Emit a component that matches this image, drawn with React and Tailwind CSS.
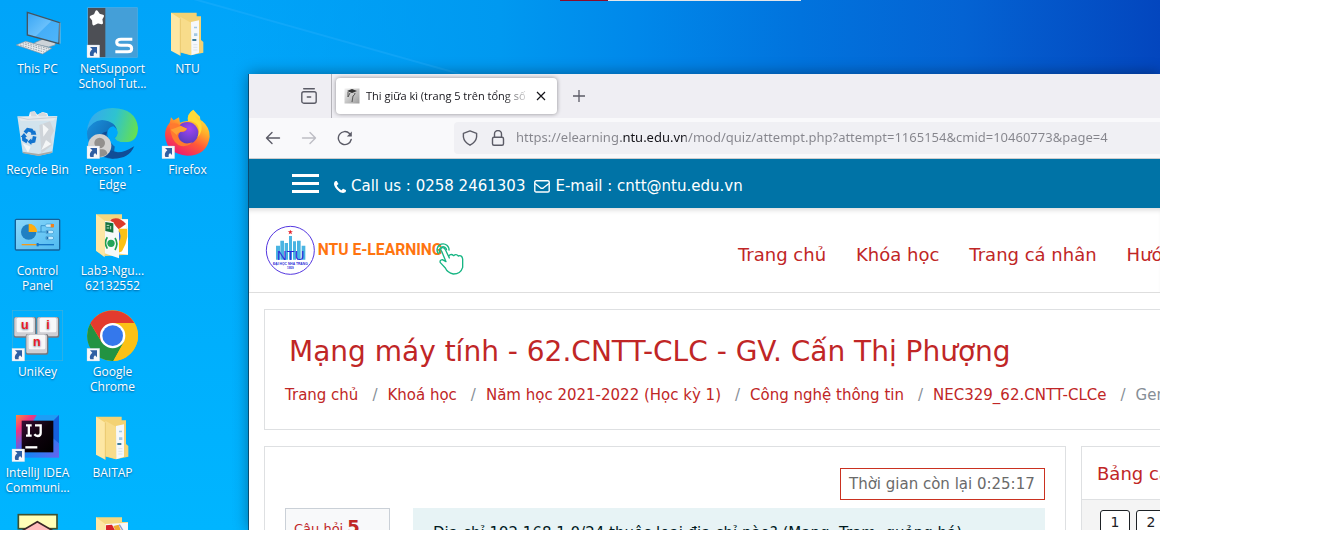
function Shortcut({ x, y }) {
  return (
    <g transform={`translate(${x} ${y})`}>
      <rect width="38" height="38" fill="#f7f8fa" stroke="#b9cfe0" strokeWidth="1" />
      <path d="M9 6H30V27L24 21Q18 25 20 33H10Q5 22 16 13Z" fill="#2f5fa3" />
    </g>
  );
}

function Glyph({ box, children }) {
  return (
    <svg viewBox={box} className="h-14 w-[57px] shrink-0 overflow-hidden" aria-hidden="true">
      {children}
    </svg>
  );
}

function ComputerIcon() {
  return (
    <Glyph box="27 12 171 168">
      <defs>
        <linearGradient id="screen" x1="0" y1="0" x2="1" y2="1">
          <stop offset="0" stopColor="#37a5f5" />
          <stop offset=".5" stopColor="#69c0fb" />
          <stop offset=".52" stopColor="#45aef7" />
          <stop offset="1" stopColor="#4fb6fb" />
        </linearGradient>
      </defs>
      <path d="M104 128L132 116L166 126L165 135L146 141L104 132Z" fill="#cdd3d8" stroke="#8a949d" strokeWidth="2" />
      <path d="M82 37L179 68L177 131L82 105Z" fill="url(#screen)" stroke="#46545f" strokeWidth="4" />
      <path d="M180 68V131" stroke="#c7ced4" strokeWidth="2" />
      <path d="M49 135L77 124L155 145L128 162Z" fill="#e9ecee" stroke="#89939b" strokeWidth="2" />
      <path d="M60 135L132 156M68 131L140 151M75 128L147 147" stroke="#9aa3ab" strokeWidth="3" strokeDasharray="5 3" />
    </Glyph>
  );
}

function RecycleBinIcon() {
  return (
    <Glyph box="27 315 171 168">
      <path d="M57 352L86 350L90 336L104 334L112 344L128 336L142 340L146 352L170 350L160 362H62Z" fill="#f3f4f6" />
      <path d="M90 336L104 334L112 350L96 356ZM112 344L128 336L142 344L130 360Z" fill="#d5d9dd" />
      <path d="M52 349L172 348L157 458L116 467L68 458Z" fill="#e4e8ec" fillOpacity=".92" />
      <path d="M55 352L84 358L170 352" fill="none" stroke="#b9c3cb" strokeWidth="2" />
      <path d="M118 375L150 364L162 392L152 412L156 436L124 460Z" fill="#cfd4d9" />
      <path d="M128 372L146 388L130 410ZM138 420L154 432L124 450ZM68 430L92 440L84 458Z" fill="#f4f6f7" />
      <path d="M68 455L116 462L157 454L155 459L116 468L69 460Z" fill="#a9a9a5" />
      <g fill="none" stroke="#1274cf" strokeWidth="11">
        <path d="M75 398L83 389L94 391L99 399" />
        <path d="M104 409L101 423L92 425" />
        <path d="M82 425L72 419L71 407" />
      </g>
      <path d="M92 404H109L105 391ZM94 415V435L83 425ZM62 411L72 399L81 411Z" fill="#1274cf" />
    </Glyph>
  );
}

function ControlPanelIcon() {
  return (
    <Glyph box="27 18 171 168">
      <defs>
        <linearGradient id="panel" x1="0" y1="0" x2="1" y2="1">
          <stop offset="0" stopColor="#8bd8fb" />
          <stop offset="1" stopColor="#4fb9f0" />
        </linearGradient>
      </defs>
      <rect x="46" y="58" width="133" height="92" rx="3" fill="url(#panel)" stroke="#146199" strokeWidth="4" />
      <circle cx="86" cy="96" r="23" fill="#2180c2" />
      <path d="M86 71A25 25 0 0 1 111 96H86Z" fill="#ffad0f" />
      <path d="M112 96H123V77H136M123 96H136" fill="none" stroke="#1c79b8" strokeWidth="2" />
      <g fill="#bfeaff" stroke="#3c9cd2" strokeWidth="2">
        <rect x="136" y="72" width="25" height="10" rx="5" />
        <rect x="136" y="91" width="25" height="10" rx="5" />
        <rect x="136" y="109" width="25" height="10" rx="5" />
      </g>
      <rect x="152" y="72" width="10" height="10" fill="#f0821c" />
      <path d="M139 92h6v8h-6zM139 110h6v8h-6z" fill="#176eb0" />
      <path d="M65 134H110" stroke="#f39b19" strokeWidth="4" />
      <path d="M110 134H162" stroke="#1474c4" strokeWidth="4" />
      <rect x="110" y="129" width="6" height="10" fill="#1474c4" />
    </Glyph>
  );
}

function Key({ x, y, letter }) {
  return (
    <g transform={`translate(${x} ${y})`}>
      <rect width="68" height="62" rx="6" fill="#77777d" />
      <rect x="2" y="1" width="62" height="57" rx="5" fill="#cfcfd4" />
      <rect x="9" y="2" width="50" height="44" rx="5" fill="#f8f8f9" />
      <text x="34" y="36" textAnchor="middle" fontFamily="Liberation Sans" fontWeight="700" fontSize="38" fill="#ee1c24">
        {letter}
      </text>
    </g>
  );
}

function UniKeyIcon() {
  return (
    <Glyph box="27 321 171 168">
      <rect x="37" y="331" width="151" height="151" fill="none" stroke="#3fb0dc" strokeWidth="2" />
      <Key x={41} y={351} letter="u" />
      <Key x={110} y={351} letter="i" />
      <Key x={77} y={402} letter="n" />
      <Shortcut x={36} y={445} />
    </Glyph>
  );
}

function IntelliJIcon() {
  return (
    <Glyph box="27 54 171 168">
      <defs>
        <linearGradient id="ijFrame" x1="0" y1="0" x2="1" y2="1">
          <stop offset="0" stopColor="#ff8a3c" />
          <stop offset=".2" stopColor="#f0357f" />
          <stop offset=".42" stopColor="#5a63e8" />
          <stop offset=".6" stopColor="#1683f4" />
          <stop offset="1" stopColor="#6a62ee" />
        </linearGradient>
        <linearGradient id="ijInner" x1="0" y1="0" x2="1" y2="1">
          <stop offset="0" stopColor="#3a0c38" />
          <stop offset=".5" stopColor="#0d020c" />
          <stop offset="1" stopColor="#000" />
        </linearGradient>
      </defs>
      <rect x="48" y="75" width="129" height="128" fill="url(#ijFrame)" />
      <path d="M110 75H177L159 93H100Z" fill="#1d9df5" />
      <path d="M177 75V160L159 145V93Z" fill="#1660dc" />
      <rect x="65" y="92" width="95" height="95" fill="url(#ijInner)" />
      <path d="M78 106H95M86.500 106V136M78 137H95M105 106H122V129Q122 138 113 138Q107 138 103 133" fill="none" stroke="#fff" strokeWidth="7" />
      <path d="M76 172H112" stroke="#fff" strokeWidth="7" />
      <Shortcut x={36} y={177} />
    </Glyph>
  );
}

function HouseIcon() {
  return (
    <Glyph box="27 357 171 168">
      <rect x="55" y="374" width="116" height="42" fill="#ffffb8" stroke="#3d5230" strokeWidth="5" />
      <path d="M60 426L112 395L165 426V500H60Z" fill="#ffbcbc" stroke="#3b2626" strokeWidth="5" />
    </Glyph>
  );
}

function NetSupportIcon() {
  return (
    <Glyph box="252 12 171 168">
      <rect x="263" y="23" width="149" height="149" fill="#449fd8" stroke="#58aee0" strokeWidth="2" />
      <rect x="264" y="24" width="52" height="147" fill="#4d4f55" />
      <path
        d="M290 35L297 45L308 48L303 57L305 69L293 66L281 72L280 60L273 51L285 46Z"
        fill="#fff"
        stroke="#fff"
        strokeWidth="8"
        strokeLinejoin="round"
      />
      <path
        d="M397 118H363Q350 118 350 127Q350 136 363 136H383Q395 136 395 146Q395 155 383 155H346"
        fill="none"
        stroke="#fff"
        strokeWidth="9"
      />
      <Shortcut x={261} y={135} />
    </Glyph>
  );
}

function EdgeIcon() {
  return (
    <Glyph box="252 315 171 168">
      <defs>
        <linearGradient id="edgeTop" x1="0" y1=".4" x2="1" y2=".6">
          <stop offset="0" stopColor="#36a9ee" />
          <stop offset=".5" stopColor="#2ec3d0" />
          <stop offset="1" stopColor="#66e04f" />
        </linearGradient>
        <linearGradient id="edgeMid" x1="0" y1="0" x2="1" y2="1">
          <stop offset="0" stopColor="#1b95e0" />
          <stop offset="1" stopColor="#0c559f" />
        </linearGradient>
      </defs>
      <path d="M261 400A77 77 0 0 1 280 350Q320 340 352 372L340 476A77 77 0 0 1 261 400Z" fill="url(#edgeMid)" />
      <path d="M323 394Q305 425 329 448Q355 470 403 438Q388 476 340 476Q294 472 292 430Q295 398 323 394Z" fill="#104d96" />
      <path d="M261 393Q267 327 338 324Q408 326 414 383Q414 426 374 427Q344 426 344 413Q352 410 352 398Q350 364 306 360Q274 363 261 393Z" fill="url(#edgeTop)" />
      <path d="M322 400Q323 382 340 379Q354 388 353 400Q351 410 344 413Q350 428 378 427Q403 427 404 437Q356 459 334 430Q322 415 322 400Z" fill="#00a9fb" />
      <circle cx="299" cy="437" r="35" fill="#d2d1cf" />
      <circle cx="299" cy="429" r="16" fill="#92908d" />
      <path d="M276 462Q278 448 290 448H309Q321 450 322 462Q299 480 276 462Z" fill="#92908d" />
      <Shortcut x={261} y={438} />
    </Glyph>
  );
}

function ChromeIcon() {
  return (
    <Glyph box="252 321 171 168">
      <circle cx="338" cy="407" r="76" fill="#fbc116" />
      <path d="M271 370A76 76 0 0 0 340 483L372 425L338 407L305 426Z" fill="#229342" />
      <path d="M271 370L305 426L320 380L338 369H403A76 76 0 0 0 271 370Z" fill="#e33b2e" />
      <path d="M338 369H404A76 76 0 0 1 340 483L372 425Z" fill="#fbc116" />
      <circle cx="338" cy="407" r="38" fill="#fff" />
      <circle cx="338" cy="407" r="31" fill="#3478ec" />
      <Shortcut x={261} y={445} />
    </Glyph>
  );
}

function FirefoxIcon() {
  return (
    <Glyph box="477 315 171 168">
      <defs>
        <linearGradient id="foxBody" x1=".8" y1="0" x2=".25" y2="1">
          <stop offset="0" stopColor="#fff04a" />
          <stop offset=".35" stopColor="#ffb02a" />
          <stop offset=".62" stopColor="#ff5a37" />
          <stop offset="1" stopColor="#ec1477" />
        </linearGradient>
        <radialGradient id="foxGlobe" cx=".6" cy=".3" r=".8">
          <stop offset="0" stopColor="#a044f2" />
          <stop offset="1" stopColor="#4f3bb5" />
        </radialGradient>
      </defs>
      <path
        d="M580 329Q591 342 600 350Q600 362 606 362Q630 382 629 410Q622 466 562 467Q500 463 495 406Q495 384 509 368L513 352L521 361L537 352L540 368Q554 362 564 363Q560 342 580 329Z"
        fill="url(#foxBody)"
      />
      <circle cx="562" cy="399" r="33" fill="url(#foxGlobe)" />
      <path d="M509 375Q524 364 542 377L561 386Q557 397 542 395Q530 404 538 418Q551 437 578 427Q558 445 535 435Q512 420 509 375Z" fill="#ff7a2f" />
      <path d="M512 389L542 378L561 386Q555 395 542 395Q532 397 530 405Z" fill="#ffa033" />
      <path d="M564 363Q580 362 592 374Q602 389 592 413Q612 392 602 366Q580 350 580 330Q560 343 564 363Z" fill="#ffda38" />
      <Shortcut x={486} y={438} />
    </Glyph>
  );
}

function FolderIcon() {
  return (
    <Glyph box="477 12 171 168">
      <path d="M513 38H590V49H603V120L610 126V158L572 166L513 150Z" fill="#f3d274" />
      <path d="M573 66L597 61V158L574 166Z" fill="#f5f8fb" />
      <path d="M582 80h9v5h-9zM582 100h10v8h-10z" fill="#a3c8e2" />
      <path d="M577 117h12v6h-12z" fill="#3f7d99" />
      <path d="M580 134h12M580 142h12M580 150h12" stroke="#dbe4ea" strokeWidth="3" />
      <path d="M541 50L573 68V165L541 156Z" fill="#f8dc8b" />
      <path d="M513 38L541 56V167L513 152Z" fill="#fde7a4" />
      <path d="M541 56V167" stroke="#e3bd60" strokeWidth="2" />
    </Glyph>
  );
}

function LabFolderIcon() {
  return (
    <Glyph box="252 18 171 168">
      <path d="M288 43H366V58H384V164L316 168L288 152Z" fill="#f5d77f" />
      <path d="M330 58H384V164L350 160Z" fill="#fff" />
      <path d="M330 60Q355 46 378 72L356 88Z" fill="#dc3a2c" />
      <path d="M378 72Q392 110 366 154L356 158V86H382Z" fill="#fbc116" />
      <path d="M356 92Q366 106 358 124Z" fill="#2b72e8" />
      <path d="M314 62L340 66L357 98V175L314 160Z" fill="#f7f9f8" />
      <path d="M316 66L340 70V98L316 93Z" fill="#15713c" />
      <path d="M320 76h8M320 84h8M332 78v10" stroke="#bfe3cb" strokeWidth="3" />
      <path d="M322 112Q311 128 322 146M345 114Q356 130 345 150" fill="none" stroke="#1d9f50" strokeWidth="5" />
      <circle cx="333" cy="130" r="11" fill="#22a457" />
      <path d="M288 43L314 62V172L288 152Z" fill="#fde7a4" />
    </Glyph>
  );
}

function ImagesFolderIcon() {
  return (
    <Glyph box="252 357 171 168">
      <path d="M288 382H366V396H384V480H288Z" fill="#f5d77f" />
      <path d="M316 402L384 398V500H316Z" fill="#f7f7fa" />
      <path d="M318 406L336 404L350 430H318Z" fill="#d8232a" />
      <path d="M340 408L356 404L366 430H350Z" fill="#f0a830" />
      <path d="M358 404L374 430" stroke="#8a9fd0" strokeWidth="4" />
      <path d="M288 382L316 402V500H288Z" fill="#fde7a4" />
    </Glyph>
  );
}

const columns = [
  [
    { icon: ComputerIcon, lines: ['This PC'] },
    { icon: RecycleBinIcon, lines: ['Recycle Bin'] },
    { icon: ControlPanelIcon, lines: ['Control', 'Panel'] },
    { icon: UniKeyIcon, lines: ['UniKey'] },
    { icon: IntelliJIcon, lines: ['IntelliJ IDEA', 'Communi...'] },
    { icon: HouseIcon, lines: [] },
  ],
  [
    { icon: NetSupportIcon, lines: ['NetSupport', 'School Tut...'] },
    { icon: EdgeIcon, lines: ['Person 1 -', 'Edge'] },
    { icon: LabFolderIcon, lines: ['Lab3-Ngu...', '62132552'] },
    { icon: ChromeIcon, lines: ['Google', 'Chrome'] },
    { icon: FolderIcon, lines: ['BAITAP'] },
    { icon: ImagesFolderIcon, lines: [] },
  ],
  [
    { icon: FolderIcon, lines: ['NTU'] },
    { icon: FirefoxIcon, lines: ['Firefox'] },
  ],
];

function DesktopIcons() {
  return (
    <aside className="flex w-[249px] shrink-0 items-start pt-1">
      {columns.map((items, c) => (
        <ul key={c} className="w-[75px]">
          {items.map(({ icon: Icon, lines }, r) => (
            <li
              key={r}
              className="flex h-[101px] flex-col items-center text-center text-[12px] leading-[15px] whitespace-nowrap text-white [text-shadow:0_1px_2px_rgba(0,40,90,0.6)]"
            >
              <Icon />
              <span className="mt-px">
                {lines.map((line) => (
                  <span key={line} className="block">
                    {line}
                  </span>
                ))}
              </span>
            </li>
          ))}
        </ul>
      ))}
    </aside>
  );
}

function TabStrip() {
  return (
    <div className="flex h-11 items-center bg-[#efeef3]">
      <div className="flex h-full w-[83px] items-center justify-end border-r border-[#b5b4ba] pr-3.5">
        <button aria-label="Firefox View">
          <svg viewBox="0 0 16 16" className="h-4 w-4" fill="none" stroke="#5b5b66" strokeWidth="1.400" strokeLinecap="round">
            <path d="M2.700 .8H13.300" />
            <rect x=".8" y="3.700" width="14.400" height="11.500" rx="2" />
            <path d="M6.300 9H9.700" />
          </svg>
        </button>
      </div>
      <div className="ml-1 flex h-9 w-[221px] items-center rounded bg-white pr-2.5 pl-2 shadow-[0_0_4px_rgba(0,0,0,0.4)]">
        <svg viewBox="0 0 16 16" className="mr-1.5 h-4 w-4 shrink-0" aria-hidden="true">
          <defs>
            <linearGradient id="fav" x1="0" y1="0" x2="1" y2="1">
              <stop offset="0" stopColor="#f2f2f2" />
              <stop offset="1" stopColor="#9b9b9b" />
            </linearGradient>
          </defs>
          <rect x=".5" y=".5" width="15" height="15" fill="url(#fav)" />
          <path d="M3 3L8 1L13 3L8 5Z" fill="#333" />
          <path d="M4 4V9L6 5M11 5Q11 7 9 8L8 14" fill="none" stroke="#555" strokeWidth="1" />
        </svg>
        <span className="min-w-0 flex-1 overflow-hidden text-[11px] leading-5 whitespace-nowrap text-[#15141a] [mask-image:linear-gradient(to_left,transparent,black_28px)]">
          Thi giữa kì (trang 5 trên tổng số
        </span>
        <button aria-label="Close tab" className="ml-1 shrink-0">
          <svg viewBox="0 0 12 12" className="h-3 w-3" stroke="#15141a" strokeWidth="1.200">
            <path d="M2 2L10 10M10 2L2 10" />
          </svg>
        </button>
      </div>
      <button aria-label="New tab" className="ml-4">
        <svg viewBox="0 0 12 12" className="h-3 w-3" stroke="#5b5b66" strokeWidth="1.300">
          <path d="M6 0V12M0 6H12" />
        </svg>
      </button>
    </div>
  );
}

function Toolbar() {
  return (
    <div className="flex h-[41px] items-center border-b border-[#cccccd] bg-[#f9f9fb] pl-4">
      <div className="flex w-[189px] shrink-0 gap-5">
        <button aria-label="Back">
          <svg viewBox="0 0 16 16" className="h-4 w-4" fill="none" stroke="#5b5b66" strokeWidth="1.400" strokeLinecap="round" strokeLinejoin="round">
            <path d="M14.500 8H1.500M7 2.500L1.500 8L7 13.500" />
          </svg>
        </button>
        <button aria-label="Forward">
          <svg viewBox="0 0 16 16" className="h-4 w-4" fill="none" stroke="#bdbdc4" strokeWidth="1.400" strokeLinecap="round" strokeLinejoin="round">
            <path d="M1.500 8H14.500M9 2.500L14.500 8L9 13.500" />
          </svg>
        </button>
        <button aria-label="Reload">
          <svg viewBox="0 0 16 16" className="h-4 w-4" fill="none" stroke="#5b5b66" strokeWidth="1.400" strokeLinecap="round">
            <path d="M14.200 9.500A6.500 6.500 0 1 1 12.500 3.500" />
            <path d="M14.800 1.500V6.500H9.800Z" fill="#5b5b66" stroke="none" />
          </svg>
        </button>
      </div>
      <div className="flex h-8 min-w-0 flex-1 items-center rounded-l bg-[#f0f0f4] pl-2">
        <svg viewBox="0 0 16 16" className="h-4 w-4 shrink-0" fill="none" stroke="#5b5b66" strokeWidth="1.400" strokeLinejoin="round" aria-hidden="true">
          <path d="M8 .9L14.600 3.300V7Q14 12 8 15.200Q2 12 1.400 7V3.300Z" />
        </svg>
        <svg viewBox="0 0 16 16" className="ml-3 h-4 w-4 shrink-0" fill="none" stroke="#5b5b66" strokeWidth="1.400" aria-hidden="true">
          <rect x="2.500" y="7.200" width="11" height="8" rx="1.500" />
          <path d="M4.500 7V4A3.500 3.500 0 0 1 11.500 4V7" />
        </svg>
        <input
          aria-label="Address"
          defaultValue="https://elearning.ntu.edu.vn/mod/quiz/attempt.php?attempt=1165154&cmid=10460773&page=4"
          className="ml-2.5 min-w-0 flex-1 bg-[linear-gradient(90deg,#85858c_105px,#15141a_105px,#15141a_170px,#85858c_170px)] bg-clip-text font-['Noto_Sans',sans-serif] text-[13px] text-transparent outline-none"
        />
      </div>
    </div>
  );
}

function TopBar() {
  return (
    <div className="flex h-[49px] items-center bg-[#0073a6] pl-[43px] text-[15px] whitespace-nowrap text-white">
      <button aria-label="Menu" className="flex w-[27px] flex-col gap-[5px]">
        <span className="h-[3px] bg-white" />
        <span className="h-[3px] bg-white" />
        <span className="h-[3px] bg-white" />
      </button>
      <div className="ml-[15px] flex items-center gap-[5px] pt-1.5">
        <svg viewBox="0 0 1408 1408" className="h-3 w-3" fill="#fff" aria-hidden="true">
          <path d="M1408 1112q0 27-10 70.500t-21 68.500q-21 50-122 106-94 51-186 51-27 0-52.500-3.500t-57.500-12.500-47.500-14.500-55.500-20.500-49-18q-98-35-175-83-128-79-264.500-215.500t-215.500-264.500q-48-77-83-175-3-9-18-49t-20.500-55.500-14.500-47.500-12.500-57.500-3.500-52.500q0-92 51-186 56-101 106-122 25-11 68.500-21t70.500-10q14 0 21 3 18 6 53 76 11 19 30 54t35 63.500 31 53.500q3 4 17.500 25t21.500 35.500 7 28.500q0 20-28.500 50t-62 55-62 53-28.500 46q0 9 5 22.500t8.500 20.500 14 24 11.500 19q76 137 174 235t235 174q2 1 19 11.500t24 14 20.500 8.500 22.500 5q18 0 46-28.500t53-62 55-62 50-28.500q14 0 28.500 7t35.500 21.500 25 17.500q25 15 53.500 31t63.500 35 54 30q70 35 76 53 3 7 3 21z" />
        </svg>
        <span>Call us : 0258 2461303</span>
        <svg viewBox="0 0 16 13" className="ml-1 h-[13px] w-4" fill="none" stroke="#fff" strokeWidth="1.400" aria-hidden="true">
          <rect x=".8" y=".8" width="14.400" height="11.200" rx="1.300" />
          <path d="M1 3.500L6.500 7.800Q8 8.800 9.500 7.800L15 3.500" />
        </svg>
        <span>E-mail : cntt@ntu.edu.vn</span>
      </div>
    </div>
  );
}

function Logo() {
  return (
    <a href="#home" aria-label="NTU E-Learning" className="shrink-0">
      <svg viewBox="45 42 600 156" className="h-[52px] w-[200px]">
        <circle cx="121" cy="121" r="72" fill="#fff" stroke="#5538e0" strokeWidth="3" />
        <path d="M78 107h12v42h-12zM91 92h11v57h-11zM104 99h10v50h-10zM117 78h9v71h-9zM129 94h9v55h-9zM141 92h11v57h-11zM155 107h11v42h-11z" fill="#4ab4e2" />
        <path d="M121 59l2 5h6l-5 3 2 6-5-3-5 3 2-6-5-3h6z" fill="#e4222a" />
        <g fontFamily="Liberation Sans" textAnchor="middle" fill="#2b2ad8">
          <text x="122" y="150" fontSize="40">NTU</text>
          <text x="121" y="165" fontSize="10" fontWeight="700">ĐẠI HỌC NHA TRANG</text>
          <text x="121" y="178" fontSize="9" fontWeight="700">1959</text>
        </g>
        <text x="203" y="135" fontFamily="Roboto" fontSize="47" fontWeight="700" fill="#ff7410">
          NTU E-LEARNING
        </text>
        <g fill="none" stroke="#16b583" strokeWidth="4" strokeLinejoin="round">
          <path
            d="M575 124Q569 116 576 113Q583 112 587 121L598 144L596 138Q603 130 611 137Q618 130 625 138Q636 134 638 147V172Q632 192 610 192Q592 188 586 174L571 158Q568 150 577 149L588 155Z"
            fill="#fff"
          />
          <path d="M566 132A18 18 0 1 1 597 122M571 129A11 11 0 1 1 590 121" />
        </g>
      </svg>
    </a>
  );
}

const navLinks = ['Trang chủ', 'Khóa học', 'Trang cá nhân', 'Hướng dẫn'];

function SiteHeader() {
  return (
    <header className="flex h-[85px] items-center border-b border-[#dedede] pl-4 shadow-[inset_0_5px_5px_-3px_rgba(0,0,0,0.15)]">
      <Logo />
      <nav className="ml-auto flex w-[422px] shrink-0 gap-[30px] pt-2 text-[18px] whitespace-nowrap text-[#c02626]">
        {navLinks.map((label) => (
          <a key={label} href="#nav">
            {label}
          </a>
        ))}
      </nav>
    </header>
  );
}

const crumbs = ['Trang chủ', 'Khoá học', 'Năm học 2021-2022 (Học kỳ 1)', 'Công nghệ thông tin', 'NEC329_62.CNTT-CLCe'];

function CourseHeader() {
  return (
    <section className="h-[121px] border border-r-0 border-[#dee0e2] pt-[21px] pl-5 whitespace-nowrap">
      <h1 className="pl-1 text-[28px] leading-[42px] text-[#c02626]">Mạng máy tính - 62.CNTT-CLC - GV. Cấn Thị Phượng</h1>
      <nav aria-label="Breadcrumb" className="mt-[11px] text-[15px] leading-[22px] text-[#868e96]">
        <ol className="flex">
          {crumbs.map((label) => (
            <li key={label} className="flex shrink-0">
              <a href="#crumb" className="text-[#c02626]">
                {label}
              </a>
              <span className="pr-2.5 pl-3.5">/</span>
            </li>
          ))}
          <li className="shrink-0">General</li>
        </ol>
      </nav>
    </section>
  );
}

function Quiz() {
  return (
    <section className="min-w-0 flex-1 border border-[#dee0e2] px-5 pt-[21px] whitespace-nowrap">
      <div className="flex justify-end">
        <div className="h-8 w-[205px] border border-[#ca3120] pl-2 text-[15px] leading-[31px] text-[#6a6a6a]">
          Thời gian còn lại 0:25:17
        </div>
      </div>
      <div className="mt-2 flex gap-[23px]">
        <div className="h-20 w-[105px] shrink-0 border border-[#cad0d7] bg-[#f8f9fa] px-2 pt-1 leading-7 text-[#c02626]">
          <h2>
            <span className="text-[13px]">Câu hỏi </span>
            <span className="text-[18px] font-bold">5</span>
          </h2>
        </div>
        <div className="h-20 min-w-0 flex-1 overflow-hidden bg-[#e7f3f5] px-5 pt-3.5 text-[15px] leading-[22px] text-[#001a1e]">
          <p>Địa chỉ 192.168.1.0/24 thuộc loại địa chỉ nào? (Mạng, Trạm, quảng bá)</p>
        </div>
      </div>
    </section>
  );
}

function QuestionMap() {
  return (
    <aside className="w-[79px] shrink-0 border border-r-0 border-[#dee0e2] whitespace-nowrap">
      <h2 className="h-[53px] border-b border-[#dee0e2] pl-[15px] text-[18px] leading-[54px] text-[#c02626]">Bảng câu hỏi</h2>
      <div className="flex gap-1.5 bg-[#f4f4f4] pt-2.5 pl-[18px]">
        {['1', '2'].map((n) => (
          <a
            key={n}
            href="#question"
            className="h-10 w-[30px] shrink-0 rounded-[3px] border border-[#1d2125] bg-white text-center text-[14px] leading-[22px] text-[#1d2125]"
          >
            {n}
          </a>
        ))}
      </div>
    </aside>
  );
}

export default function App() {
  return (
    <div className="bg-white pr-[178px] font-['Open_Sans',sans-serif]">
      <main className="relative flex h-[calc(100vh-18px)] overflow-hidden bg-[linear-gradient(90deg,transparent_230px,#0099f0_43%,#0088ea_55%,#0173dd_69%,#0463d3_83%,#0346be),linear-gradient(180deg,#00a4f9,#00b5ff)]">
        <svg className="absolute top-0 left-0 h-[148px] w-[460px]" viewBox="0 0 460 148" aria-hidden="true">
          <path d="M190 -2L460 74" stroke="#3cb8ff" strokeOpacity=".25" strokeWidth="2" />
        </svg>
        <div className="absolute top-0 left-[560px] flex h-px w-[241px] bg-[#e4e6ea]">
          <span className="w-12 bg-[#8a0c2c]" />
        </div>
        <DesktopIcons />
        <div className="relative mt-[74px] min-w-0 flex-1 bg-white shadow-[0_0_14px_rgba(0,0,0,0.4),-1px_0_0_rgba(20,60,90,0.7)]">
          <div className="h-full overflow-hidden">
            <TabStrip />
            <Toolbar />
            <div className="font-['DejaVu_Sans',sans-serif]">
              <TopBar />
              <SiteHeader />
              <div className="flex flex-col gap-4 pt-4 pl-[15px]">
                <CourseHeader />
                <div className="flex gap-[15px]">
                  <Quiz />
                  <QuestionMap />
                </div>
              </div>
            </div>
          </div>
        </div>
      </main>
    </div>
  );
}
